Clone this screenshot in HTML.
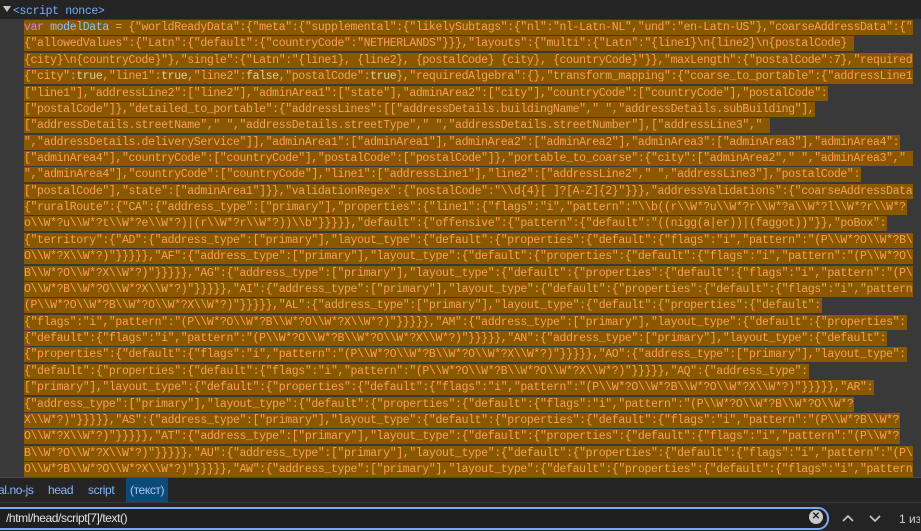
<!DOCTYPE html>
<html><head><meta charset="utf-8"><style>
*{margin:0;padding:0;box-sizing:border-box}
body{width:921px;height:531px;overflow:hidden;background:#242424;font-family:"Liberation Mono",monospace;position:relative}
.top{position:absolute;left:0;top:0;width:921px;height:19px;background:#242424;color:#7cacf8;font-size:11.5px;line-height:19px;letter-spacing:-0.37px}
.top .tri{position:absolute;left:3px;top:6px;width:0;height:0;border-left:4px solid transparent;border-right:4px solid transparent;border-top:6px solid #c8c8c8}
.top span.t{position:absolute;left:13px;top:2px}
.code{position:absolute;left:0;top:19px;width:921px;height:458px;background:#393939;overflow:hidden}
.l{position:absolute;left:24px;white-space:pre;font-size:11.5px;letter-spacing:-0.37px;line-height:15px;height:15px}
.l span.h{background:#8a5800;color:#f7a058;display:inline-block;height:15px;padding-right:1px}
.kw{color:#c98be6}.vn{color:#8fc3f5}.bo{color:#e6cf9a}
.crumb{position:absolute;left:0;top:477px;width:921px;height:25px;background:#242424;border-top:1px solid #4a4a4a;font-family:"Liberation Sans",sans-serif;font-size:12px;color:#8ab4f8;letter-spacing:-0.4px}
.crumb span{position:absolute;top:0;line-height:24px}
.crumb .sel{background:#0c4a78;color:#a8c7fa;padding:0 4px}
.search{position:absolute;left:0;top:502px;width:921px;height:29px;background:#242424;border-top:1px solid #3a3a3a}
.box{position:absolute;left:-10px;top:4px;width:839px;height:23px;border:2px solid #7ca8f0;border-radius:11px;background:#1f1f1f}
.box span{position:absolute;left:14px;top:2px;font-family:"Liberation Sans",sans-serif;font-size:12px;color:#e3e3e3;letter-spacing:-0.4px}
.x{position:absolute;left:809px;top:510px;width:14px;height:14px;border-radius:50%;background:#c8c8c8;color:#242424;font:bold 10px/14px "Liberation Sans",sans-serif;text-align:center}
</style></head><body>
<div class="top"><div class="tri"></div><span class="t">&lt;script nonce&gt;</span></div>
<div class="code">
<div class="l" style="top:1px"><span class="h"><span class="kw">var</span> <span class="vn">modelData</span> = {"worldReadyData":{"meta":{"supplemental":{"likelySubtags":{"nl":"nl-Latn-NL","und":"en-Latn-US"},"coarseAddressData":{"</span></div>
<div class="l" style="top:17.4px"><span class="h">{"allowedValues":{"Latn":{"default":{"countryCode":"NETHERLANDS"}}},"layouts":{"multi":{"Latn":"{line1}\n{line2}\n{postalCode} </span></div>
<div class="l" style="top:33.8px"><span class="h">{city}\n{countryCode}"},"single":{"Latn":"{line1}, {line2}, {postalCode} {city}, {countryCode}"}},"maxLength":{"postalCode":7},"required</span></div>
<div class="l" style="top:50.1px"><span class="h">{"city":<span class="bo">true</span>,"line1":<span class="bo">true</span>,"line2":<span class="bo">false</span>,"postalCode":<span class="bo">true</span>},"requiredAlgebra":{},"transform_mapping":{"coarse_to_portable":{"addressLine1</span></div>
<div class="l" style="top:66.5px"><span class="h">["line1"],"addressLine2":["line2"],"adminArea1":["state"],"adminArea2":["city"],"countryCode":["countryCode"],"postalCode":</span></div>
<div class="l" style="top:82.9px"><span class="h">["postalCode"]},"detailed_to_portable":{"addressLines":[["addressDetails.buildingName"," ","addressDetails.subBuilding"],</span></div>
<div class="l" style="top:99.2px"><span class="h">["addressDetails.streetName"," ","addressDetails.streetType"," ","addressDetails.streetNumber"],["addressLine3"," </span></div>
<div class="l" style="top:115.6px"><span class="h">","addressDetails.deliveryService"]],"adminArea1":["adminArea1"],"adminArea2":["adminArea2"],"adminArea3":["adminArea3"],"adminArea4":</span></div>
<div class="l" style="top:132px"><span class="h">["adminArea4"],"countryCode":["countryCode"],"postalCode":["postalCode"]},"portable_to_coarse":{"city":["adminArea2"," ","adminArea3"," </span></div>
<div class="l" style="top:148.3px"><span class="h">","adminArea4"],"countryCode":["countryCode"],"line1":["addressLine1"],"line2":["addressLine2"," ","addressLine3"],"postalCode":</span></div>
<div class="l" style="top:164.7px"><span class="h">["postalCode"],"state":["adminArea1"]}},"validationRegex":{"postalCode":"\\d{4}[ ]?[A-Z]{2}"}}},"addressValidations":{"coarseAddressData</span></div>
<div class="l" style="top:181.1px"><span class="h">{"ruralRoute":{"CA":{"address_type":["primary"],"properties":{"line1":{"flags":"i","pattern":"\\b((r\\W*?u\\W*?r\\W*?a\\W*?l\\W*?r\\W*?</span></div>
<div class="l" style="top:197.4px"><span class="h">o\\W*?u\\W*?t\\W*?e\\W*?)|(r\\W*?r\\W*?))\\b"}}}}},"default":{"offensive":{"pattern":{"default":"((nigg(a|er))|(faggot))"}},"poBox":</span></div>
<div class="l" style="top:213.8px"><span class="h">{"territory":{"AD":{"address_type":["primary"],"layout_type":{"default":{"properties":{"default":{"flags":"i","pattern":"(P\\W*?O\\W*?B\</span></div>
<div class="l" style="top:230.2px"><span class="h">O\\W*?X\\W*?)"}}}}},"AF":{"address_type":["primary"],"layout_type":{"default":{"properties":{"default":{"flags":"i","pattern":"(P\\W*?O\</span></div>
<div class="l" style="top:246.5px"><span class="h">B\\W*?O\\W*?X\\W*?)"}}}}},"AG":{"address_type":["primary"],"layout_type":{"default":{"properties":{"default":{"flags":"i","pattern":"(P\</span></div>
<div class="l" style="top:262.9px"><span class="h">O\\W*?B\\W*?O\\W*?X\\W*?)"}}}}},"AI":{"address_type":["primary"],"layout_type":{"default":{"properties":{"default":{"flags":"i","pattern</span></div>
<div class="l" style="top:279.3px"><span class="h">(P\\W*?O\\W*?B\\W*?O\\W*?X\\W*?)"}}}}},"AL":{"address_type":["primary"],"layout_type":{"default":{"properties":{"default":</span></div>
<div class="l" style="top:295.6px"><span class="h">{"flags":"i","pattern":"(P\\W*?O\\W*?B\\W*?O\\W*?X\\W*?)"}}}}},"AM":{"address_type":["primary"],"layout_type":{"default":{"properties":</span></div>
<div class="l" style="top:312px"><span class="h">{"default":{"flags":"i","pattern":"(P\\W*?O\\W*?B\\W*?O\\W*?X\\W*?)"}}}}},"AN":{"address_type":["primary"],"layout_type":{"default":</span></div>
<div class="l" style="top:328.4px"><span class="h">{"properties":{"default":{"flags":"i","pattern":"(P\\W*?O\\W*?B\\W*?O\\W*?X\\W*?)"}}}}},"AO":{"address_type":["primary"],"layout_type":</span></div>
<div class="l" style="top:344.7px"><span class="h">{"default":{"properties":{"default":{"flags":"i","pattern":"(P\\W*?O\\W*?B\\W*?O\\W*?X\\W*?)"}}}}},"AQ":{"address_type":</span></div>
<div class="l" style="top:361.1px"><span class="h">["primary"],"layout_type":{"default":{"properties":{"default":{"flags":"i","pattern":"(P\\W*?O\\W*?B\\W*?O\\W*?X\\W*?)"}}}}},"AR":</span></div>
<div class="l" style="top:377.5px"><span class="h">{"address_type":["primary"],"layout_type":{"default":{"properties":{"default":{"flags":"i","pattern":"(P\\W*?O\\W*?B\\W*?O\\W*?</span></div>
<div class="l" style="top:393.8px"><span class="h">X\\W*?)"}}}}},"AS":{"address_type":["primary"],"layout_type":{"default":{"properties":{"default":{"flags":"i","pattern":"(P\\W*?B\\W*?</span></div>
<div class="l" style="top:410.2px"><span class="h">O\\W*?X\\W*?)"}}}}},"AT":{"address_type":["primary"],"layout_type":{"default":{"properties":{"default":{"flags":"i","pattern":"(P\\W*?</span></div>
<div class="l" style="top:426.6px"><span class="h">B\\W*?O\\W*?X\\W*?)"}}}}},"AU":{"address_type":["primary"],"layout_type":{"default":{"properties":{"default":{"flags":"i","pattern":"(P\</span></div>
<div class="l" style="top:442.9px"><span class="h">O\\W*?B\\W*?O\\W*?X\\W*?)"}}}}},"AW":{"address_type":["primary"],"layout_type":{"default":{"properties":{"default":{"flags":"i","pattern</span></div>
</div>
<div class="crumb"><span style="left:-2px">al.no-js</span><span style="left:48px">head</span><span style="left:88px">script</span><span class="sel" style="left:126px">(текст)</span></div>
<div class="search"><div class="box"><span>/html/head/script[7]/text()</span></div></div>
<div class="x">✕</div>
<svg style="position:absolute;left:840px;top:511px" width="80" height="14"><path d="M3 10 L8 5 L13 10" stroke="#c8c8c8" stroke-width="1.6" fill="none"/><path d="M30 5 L35 10 L40 5" stroke="#c8c8c8" stroke-width="1.6" fill="none"/><text x="59" y="12" fill="#d0d0d0" font-family="Liberation Sans,sans-serif" font-size="12">1 из</text></svg>
</body></html>
